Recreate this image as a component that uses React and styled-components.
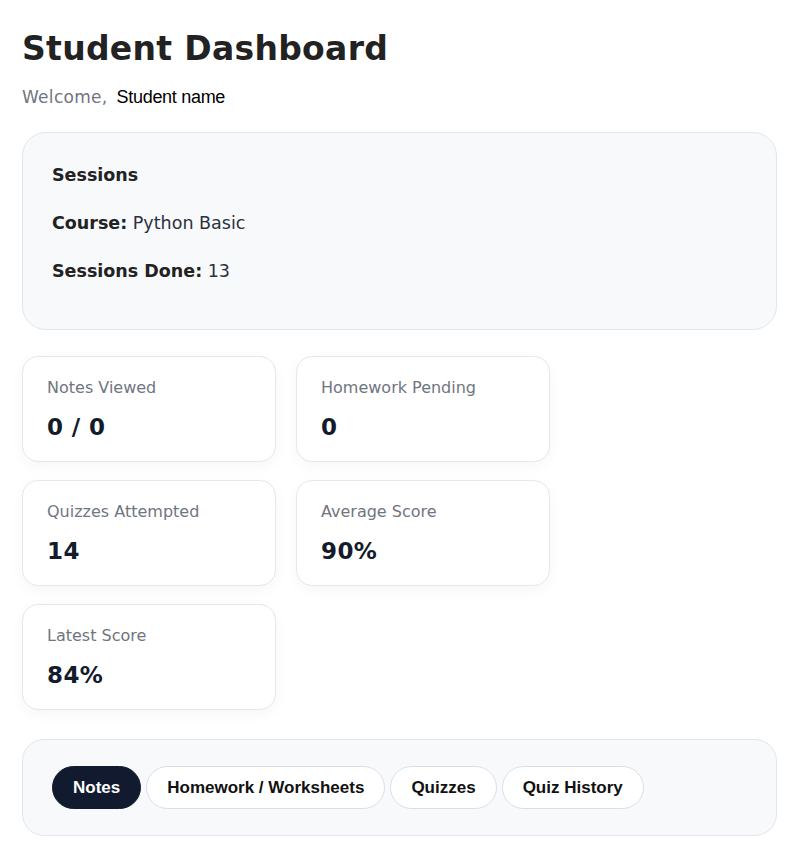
import styled, { createGlobalStyle } from "styled-components";

const GlobalStyle = createGlobalStyle`
  * { box-sizing: border-box; }
  body {
    margin: 0;
    background: #fff;
    font-family: "DejaVu Sans", "Noto Sans", sans-serif;
    color: #1a2233;
  }
`;

const stats = [
  { label: "Notes Viewed", value: "0 / 0" },
  { label: "Homework Pending", value: "0" },
  { label: "Quizzes Attempted", value: "14" },
  { label: "Average Score", value: "90%" },
  { label: "Latest Score", value: "84%" },
];

const tabs = ["Notes", "Homework / Worksheets", "Quizzes", "Quiz History"];

const App = () => {
  return (
    <Page>
      <GlobalStyle />
      <Header>
        <h1>Student Dashboard</h1>
        <p>
          Welcome,<span>Student name</span>
        </p>
      </Header>
      <SessionsCard>
        <h3>Sessions</h3>
        <p>
          <strong>Course:</strong> Python Basic
        </p>
        <p>
          <strong>Sessions Done:</strong> 13
        </p>
      </SessionsCard>
      <StatsGrid>
        {stats.map((s) => (
          <StatCard key={s.label}>
            <span>{s.label}</span>
            <strong>{s.value}</strong>
          </StatCard>
        ))}
      </StatsGrid>
      <TabsCard>
        {tabs.map((t, i) => (
          <TabButton key={t} $active={i === 0}>
            {t}
          </TabButton>
        ))}
      </TabsCard>
    </Page>
  );
};

const Page = styled.div`
  width: 798px;
  height: 842px;
  padding: 22px 21px 0 22px;
  overflow: hidden;
  display: flex;
  flex-direction: column;
`;

const Header = styled.div`
  h1 {
    margin: 4px 0 0;
    font-family: "DejaVu Sans", sans-serif;
    font-size: 33px;
    font-weight: 700;
    letter-spacing: 0.3px;
    line-height: 46px;
    color: #222;
  }
  p {
    margin: 14px 0 0;
    font-size: 17px;
    font-weight: 400;
    color: #707580;
    line-height: 22px;
    letter-spacing: 0.3px;
    span {
      font-family: "Liberation Sans", Arial, sans-serif;
      font-size: 18px;
      color: #000;
      letter-spacing: -0.3px;
      margin-left: 9px;
    }
  }
`;

const SessionsCard = styled.div`
  margin-top: 24px;
  height: 198px;
  background: #f8f9fb;
  border: 1px solid #e1e6ee;
  border-radius: 24px;
  padding: 30px 29px;
  h3 {
    margin: 0;
    font-size: 17.5px;
    font-weight: 700;
    color: #222;
    line-height: 24px;
  }
  p {
    margin: 24px 0 0;
    font-size: 17.5px;
    color: #2a3140;
    line-height: 24px;
    strong {
      font-weight: 700;
      color: #222;
    }
  }
`;

const StatsGrid = styled.div`
  margin-top: 26px;
  display: grid;
  grid-template-columns: 254px 254px;
  column-gap: 20px;
  row-gap: 18px;
`;

const StatCard = styled.div`
  height: 106px;
  background: #fff;
  border: 1px solid #ece7df;
  border-radius: 16px;
  box-shadow: 0 4px 14px rgba(0, 0, 0, 0.04);
  padding: 20px 24px;
  display: flex;
  flex-direction: column;
  gap: 14px;
  span {
    font-size: 16px;
    color: #707580;
    line-height: 22px;
  }
  strong {
    font-size: 23px;
    font-weight: 700;
    color: #141c2b;
    letter-spacing: 0.4px;
    line-height: 28px;
  }
`;

const TabsCard = styled.div`
  margin-top: 29px;
  height: 97px;
  background: #f8f9fb;
  border: 1px solid #e1e6ee;
  border-radius: 22px;
  padding: 0 29px;
  display: flex;
  align-items: center;
  gap: 5px;
`;

const TabButton = styled.button`
  height: 43px;
  padding: 0 20px;
  border-radius: 999px;
  border: 1px solid ${(p) => (p.$active ? "#111a2e" : "#d9dfe8")};
  background: ${(p) => (p.$active ? "#111a2e" : "#fff")};
  color: ${(p) => (p.$active ? "#fff" : "#111")};
  font-family: "Liberation Sans", Arial, sans-serif;
  font-size: 17px;
  font-weight: 700;
  letter-spacing: 0;
`;

export default App;
